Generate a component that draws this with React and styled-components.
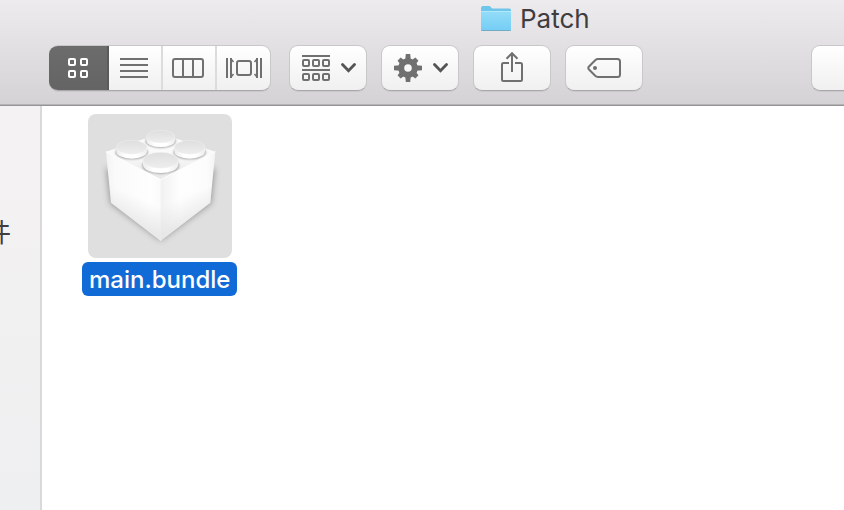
import React from "react";
import styled, { createGlobalStyle, css } from "styled-components";

const GlobalStyle = createGlobalStyle`
  * { box-sizing: border-box; }
  html, body, #root { height: 100%; }
  body {
    margin: 0;
    overflow: hidden;
    font-family: Inter, "Noto Sans CJK SC", sans-serif;
    color: #3f3d40;
  }
  button { font: inherit; color: inherit; border: 0; margin: 0; }
  svg { display: block; flex: none; }
`;

const Window = styled.div`
  display: flex;
  flex-direction: column;
  height: 100%;
  background: #fff;
`;

const Header = styled.header`
  flex: none;
  overflow: hidden;
  background: linear-gradient(#edebed, #d4d2d4);
  border-bottom: 1px solid #969496;
  box-shadow: inset 0 -1px 0 #b4b2b4;
`;

const TitleBar = styled.div`
  display: flex;
  align-items: center;
  gap: 8px;
  height: 37px;
  padding-left: 480px;
`;

const Title = styled.h1`
  margin: 0;
  font-size: 26px;
  line-height: 32px;
  font-weight: 400;
  white-space: nowrap;
`;

const Toolbar = styled.div`
  display: flex;
  gap: 14px;
  padding: 8px 0 14px 49px;
`;

const surface = css`
  height: 46px;
  border-radius: 9px;
  border: 1px solid #c9c7c9;
  border-bottom-color: #aaa8aa;
  background: linear-gradient(#fff, #f0f0f0);
  box-shadow: 0 1px 0 rgba(0, 0, 0, 0.06);
`;

const Segments = styled.div`
  ${surface}
  display: flex;
  flex: none;
  overflow: hidden;
  margin-right: 4px;
  border-left: 0;
`;

const Segment = styled.button`
  display: flex;
  align-items: center;
  justify-content: center;
  width: ${(p) => p.$width}px;
  padding: 0;
  color: #707070;
  background: transparent;
  box-shadow: inset 2px 0 0 #dddcdd;
  &[aria-pressed="true"] {
    color: #fff;
    background: linear-gradient(#6c6c6c, #646464);
    box-shadow: 2px 0 0 #5c5a5c, 0 0 0 1px #666;
    z-index: 1;
  }
`;

const ToolButton = styled.button`
  && {
    ${surface}
  }
  display: flex;
  flex: none;
  align-items: center;
  justify-content: ${(p) => (p.$menu ? "flex-start" : "center")};
  gap: 11px;
  width: 78px;
  padding: 0 ${(p) => (p.$menu ? 12 : 0)}px;
  color: #707070;
`;

const ToolGap = styled.div`
  flex: none;
  width: 140px;
`;

const Body = styled.div`
  display: flex;
  flex: 1;
  min-height: 0;
`;

const Sidebar = styled.nav`
  flex: none;
  width: 42px;
  padding-top: 111px;
  border-right: 2px solid #dad9da;
  background: linear-gradient(#f5f2f3, #f0f0f1 65%, #eeeff0);
  overflow: hidden;
`;

const SidebarLink = styled.a`
  display: flex;
  justify-content: flex-end;
  padding-right: 29px;
  font-size: 26px;
  line-height: 32px;
  color: #3f3d40;
  text-decoration: none;
  white-space: nowrap;
`;

const Files = styled.main`
  flex: 1;
  padding: 8px 40px;
`;

const File = styled.button`
  display: flex;
  flex-direction: column;
  align-items: center;
  gap: 4px;
  padding: 0;
  background: none;
`;

const FileIcon = styled.span`
  border-radius: 8px;
  background: #dfdfdf;
  overflow: hidden;
`;

const FileName = styled.span`
  padding: 2px 7px 0;
  border-radius: 6px;
  background: #116bd7;
  color: #fff;
  font-size: 24px;
  line-height: 32px;
  font-weight: 500;
`;

const Folder = () => (
  <svg width="32" height="26" viewBox="0 0 32 26" aria-hidden="true">
    <defs>
      <linearGradient id="folder" x1="0" y1="0" x2="0" y2="1">
        <stop offset="0" stopColor="#92dcf8" />
        <stop offset="1" stopColor="#74cdf5" />
      </linearGradient>
    </defs>
    <path d="M1 24V2.5Q1 0 2.5 0H9q1.2 0 2 1.2L12 2.5H29.5Q31 2.5 31 4V24Z" fill="#6fc6ea" />
    <path d="M1 6H31V23.5Q31 25 29.5 25H2.5Q1 25 1 23.5Z" fill="url(#folder)" />
    <path d="M1.5 24.5H30.5" stroke="#73aac4" />
    <path d="M1 5.5H31" stroke="#b1e9fb" />
  </svg>
);

const GridIcon = () => (
  <svg width="20" height="20" fill="none" stroke="currentColor" strokeWidth="2">
    {[1, 13].map((y) => [1, 13].map((x) => <rect key={`${x}-${y}`} x={x} y={y} width="6" height="6" rx="1" />))}
  </svg>
);

const ListIcon = () => (
  <svg width="28" height="20" stroke="currentColor" strokeWidth="2">
    <path d="M0 1H28M0 7H28M0 13H28M0 19H28" />
  </svg>
);

const ColumnsIcon = () => (
  <svg width="32" height="20" fill="none" stroke="currentColor" strokeWidth="2">
    <rect x="1" y="1" width="30" height="18" rx="2" />
    <path d="M11 1V19M21 1V19" />
  </svg>
);

const CoverFlowIcon = () => (
  <svg width="38" height="20" fill="none" stroke="currentColor" strokeWidth="2">
    <rect x="13" y="3" width="14" height="14" rx="2" />
    <path d="M3 0V20M7 0V20M33 0V20M37 0V20" />
    <path d="M7 1L9.5 4M7 19L9.5 16M33 1L30.5 4M33 19L30.5 16" strokeWidth="1.5" />
  </svg>
);

const ArrangeIcon = () => (
  <svg width="28" height="26" fill="none" stroke="currentColor" strokeWidth="2">
    <path d="M0 1H28M0 15H28" />
    {[5, 19].map((y) => [1, 11, 21].map((x) => <rect key={`${x}-${y}`} x={x} y={y} width="6" height="6" rx="1" />))}
  </svg>
);

const GearIcon = () => (
  <svg width="28" height="28" viewBox="-14 -14 28 28" fill="currentColor">
    {[0, 45, 90, 135, 180, 225, 270, 315].map((a) => (
      <path key={a} d={`M-2.8 -8L-2.2 -${a % 90 ? 12.6 : 14}H2.2L2.8 -8Z`} transform={`rotate(${a})`} />
    ))}
    <circle r="6.8" fill="none" stroke="currentColor" strokeWidth="6" />
  </svg>
);

const Chevron = () => (
  <svg width="15" height="10" fill="none" stroke="#555" strokeWidth="2.8" strokeLinecap="round">
    <path d="M1.5 1.5L7.5 7.8L13.5 1.5" />
  </svg>
);

const ShareIcon = () => (
  <svg width="22" height="32" fill="none" stroke="currentColor" strokeWidth="2">
    <path d="M8 11H2.5Q1 11 1 12.5V27.5Q1 29 2.5 29H19.5Q21 29 21 27.5V12.5Q21 11 19.5 11H14" />
    <path d="M11 20V1.5M5.5 6.8L11 1.2L16.5 6.8" />
  </svg>
);

const TagIcon = () => (
  <svg width="34" height="20" fill="none" stroke="currentColor" strokeWidth="2">
    <path d="M11 1H30.5Q33 1 33 3.5V16.5Q33 19 30.5 19H11Q9.5 19 8.2 17.8L2 11.5Q.6 10 2 8.5L8.2 2.2Q9.5 1 11 1Z" />
    <circle cx="8" cy="10" r="2" fill="currentColor" stroke="none" />
  </svg>
);

const Stud = ({ x, y, rx, ry, h }) => (
  <g>
    <ellipse cx={x} cy={y + h + 2} rx={rx + 2} ry={ry} fill="#9c9c9c" filter="url(#soft)" />
    <path d={`M${x - rx} ${y}V${y + h}A${rx} ${ry} 0 0 0 ${x + rx} ${y + h}V${y}Z`} fill="url(#rim)" />
    <ellipse cx={x} cy={y} rx={rx} ry={ry} fill="url(#stud)" stroke="#f8f8f8" strokeWidth="1" />
  </g>
);

const BrickIcon = () => (
  <svg width="144" height="144" viewBox="36 24 432 432" aria-hidden="true">
    <defs>
      <linearGradient id="top" x1="0" y1="0" x2="0" y2="1">
        <stop offset="0.4" stopColor="#fafafa" />
        <stop offset="1" stopColor="#e8e8e8" />
      </linearGradient>
      <linearGradient id="left" x1="0" y1="0" x2="1" y2="0">
        <stop offset="0" stopColor="#f3f3f3" />
        <stop offset="0.15" stopColor="#fafafa" />
        <stop offset="0.8" stopColor="#fefefe" />
        <stop offset="1" stopColor="#fafafa" />
      </linearGradient>
      <linearGradient id="right" x1="0" y1="0" x2="1" y2="0">
        <stop offset="0" stopColor="#f1f1f1" />
        <stop offset="0.35" stopColor="#fefefe" />
        <stop offset="0.85" stopColor="#fcfcfc" />
        <stop offset="1" stopColor="#f3f3f3" />
      </linearGradient>
      <linearGradient id="foot-left" gradientUnits="userSpaceOnUse" x1="203" y1="280" x2="172" y2="350">
        <stop offset="0" stopColor="#e2e2e2" stopOpacity="0" />
        <stop offset="1" stopColor="#e2e2e2" stopOpacity="0.7" />
      </linearGradient>
      <linearGradient id="foot-right" gradientUnits="userSpaceOnUse" x1="305" y1="280" x2="336" y2="350">
        <stop offset="0" stopColor="#e2e2e2" stopOpacity="0" />
        <stop offset="1" stopColor="#e2e2e2" stopOpacity="0.7" />
      </linearGradient>
      <linearGradient id="stud" x1="0" y1="0" x2="0" y2="1">
        <stop offset="0" stopColor="#dedede" />
        <stop offset="1" stopColor="#eeeeee" />
      </linearGradient>
      <linearGradient id="rim" x1="0" y1="0" x2="1" y2="0">
        <stop offset="0" stopColor="#ececec" />
        <stop offset="0.3" stopColor="#fff" />
        <stop offset="0.7" stopColor="#fff" />
        <stop offset="1" stopColor="#ececec" />
      </linearGradient>
      <filter id="soft" x="-30%" y="-30%" width="160%" height="160%">
        <feGaussianBlur stdDeviation="3" />
      </filter>
      <filter id="shade" x="-30%" y="-30%" width="160%" height="160%">
        <feGaussianBlur stdDeviation="9" />
      </filter>
    </defs>
    <path d="M92 185L254 225L416 185L405 292L254 403L103 292Z" fill="#808080" opacity=".8" filter="url(#shade)" />
    <path d="M90 137L254 82L418 137L254 222Z" fill="url(#top)" />
    <Stud x={254} y={92} rx={43} ry={19} h={12} />
    <Stud x={167} y={124} rx={46} ry={21} h={13} />
    <Stud x={341} y={124} rx={46} ry={21} h={13} />
    <Stud x={254} y={163} rx={53} ry={24} h={14} />
    <path d="M90 137L256 221V403L254 404L105 290Z" fill="url(#left)" />
    <path d="M90 137L256 221V403L254 404L105 290Z" fill="url(#foot-left)" />
    <path d="M418 137L254 221V404L403 290Z" fill="url(#right)" />
    <path d="M418 137L254 221V404L403 290Z" fill="url(#foot-right)" />
    <path d="M90 137L254 221L418 137" fill="none" stroke="#fff" strokeWidth="3" />
  </svg>
);

const views = [
  { name: "Icon view", Icon: GridIcon, width: 58 },
  { name: "List view", Icon: ListIcon, width: 54 },
  { name: "Column view", Icon: ColumnsIcon, width: 54 },
  { name: "Cover Flow view", Icon: CoverFlowIcon, width: 55 },
];

export default function App() {
  const [view, setView] = React.useState(0);
  return (
    <>
      <GlobalStyle />
      <Window>
        <Header>
          <TitleBar>
            <Folder />
            <Title>Patch</Title>
          </TitleBar>
          <Toolbar>
            <Segments role="group" aria-label="View">
              {views.map(({ name, Icon, width }, i) => (
                <Segment key={name} $width={width} aria-label={name} aria-pressed={view === i} onClick={() => setView(i)}>
                  <Icon />
                </Segment>
              ))}
            </Segments>
            <ToolButton $menu aria-label="Arrange">
              <ArrangeIcon />
              <Chevron />
            </ToolButton>
            <ToolButton $menu aria-label="Actions">
              <GearIcon />
              <Chevron />
            </ToolButton>
            <ToolButton aria-label="Share">
              <ShareIcon />
            </ToolButton>
            <ToolButton aria-label="Edit tags">
              <TagIcon />
            </ToolButton>
            <ToolGap />
            <ToolButton aria-label="Search" />
          </Toolbar>
        </Header>
        <Body>
          <Sidebar>
            <SidebarLink href="#files">件</SidebarLink>
          </Sidebar>
          <Files id="files">
            <File>
              <FileIcon>
                <BrickIcon />
              </FileIcon>
              <FileName>main.bundle</FileName>
            </File>
          </Files>
        </Body>
      </Window>
    </>
  );
}
